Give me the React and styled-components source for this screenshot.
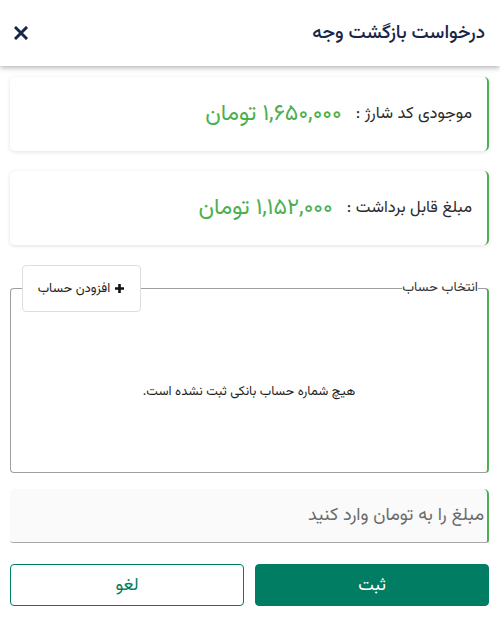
import React from "react";
import styled, { createGlobalStyle } from "styled-components";

const Global = createGlobalStyle`
  html, body { margin: 0; padding: 0; background: #ffffff; }
  body { font-family: "Vazirmatn", "Noto Sans Arabic", "DejaVu Sans", sans-serif; direction: rtl; }
  * { box-sizing: border-box; }
`;

const Page = styled.div`
  width: 500px;
  height: 620px;
  background: #ffffff;
  display: flex;
  flex-direction: column;
`;

const Header = styled.header`
  height: 66px;
  flex-shrink: 0;
  display: flex;
  align-items: center;
  justify-content: space-between;
  padding: 0 15px 0 13px;
  background: #fff;
  box-shadow: 0 2px 5px rgba(0, 0, 0, 0.28);
  position: relative;
  z-index: 1;
`;

const Title = styled.h1`
  margin: 0;
  font-size: 19px;
  font-weight: 500;
  color: #17264a;
`;

const Close = styled.button`
  border: 0;
  background: transparent;
  padding: 0;
  width: 16px;
  height: 16px;
  display: flex;
  align-items: center;
  justify-content: center;
  cursor: pointer;
`;

const Body = styled.main`
  display: flex;
  flex-direction: column;
  padding: 11px 11px 0 10px;
`;

const Card = styled.div`
  height: 74px;
  margin-bottom: ${(p) => p.$gap || 0}px;
  background: #fff;
  border-radius: 5px;
  border-right: 2px solid #4caf50;
  box-shadow: 0 1px 4px rgba(0, 0, 0, 0.12);
  display: flex;
  align-items: center;
  padding: 0 15px 0 12px;
  gap: 14px;
`;

const Label = styled.span`
  font-size: 16.5px;
  color: #2b2b2b;
`;

const Value = styled.span`
  font-size: 23px;
  color: #4caf50;
`;

const AccountSection = styled.section`
  position: relative;
  margin-top: 20px;
  padding-top: 14px;
`;

const Fieldset = styled.fieldset`
  margin: 0;
  height: 194px;
  border: 1px solid #9e9e9e;
  border-right: 2px solid #4caf50;
  border-radius: 4px;
  padding: 0;
  display: flex;
  align-items: center;
  justify-content: center;
`;

const Legend = styled.legend`
  font-size: 13.5px;
  color: #333;
  padding: 0;
  margin-right: 9px;
  line-height: 18px;
`;

const Empty = styled.p`
  margin: 14px 0 0;
  font-size: 13px;
  color: #1f1f1f;
`;

const AddButton = styled.button`
  position: absolute;
  top: 0;
  left: 12px;
  width: 119px;
  height: 47px;
  background: #fff;
  border: 1px solid #dedede;
  border-radius: 4px;
  font-family: inherit;
  font-size: 13px;
  color: #222;
  display: flex;
  align-items: center;
  justify-content: center;
  gap: 4px;
  direction: rtl;
  cursor: pointer;
`;

const AmountInput = styled.input`
  margin-top: 16px;
  height: 54px;
  width: 100%;
  background: #fafafa;
  border: 0;
  border-bottom: 1px solid #a8a8a8;
  border-right: 2px solid #4caf50;
  border-radius: 5px 5px 3px 3px;
  padding: 0 3px 0 10px;
  font-family: inherit;
  font-size: 18px;
  color: #333;
  direction: rtl;
  outline: none;
  &::placeholder { color: #6b6b6b; }
`;

const Actions = styled.div`
  margin-top: 21px;
  display: flex;
  gap: 11px;
`;

const ActionButton = styled.button`
  flex: 1;
  height: 42px;
  border-radius: 4px;
  font-family: inherit;
  font-size: 17.5px;
  cursor: pointer;
  border: 1px solid #007d62;
  background: ${(p) => (p.$primary ? "#007d62" : "#ffffff")};
  color: ${(p) => (p.$primary ? "#ffffff" : "#007d62")};
`;

export default function App() {
  return (
    <Page>
      <Global />
      <Header>
        <Title>درخواست بازگشت وجه</Title>
        <Close aria-label="بستن">
          <svg width="14" height="14" viewBox="0 0 14 14">
            <path d="M2 2 L12 12 M12 2 L2 12" stroke="#17264a" strokeWidth="3" strokeLinecap="square" />
          </svg>
        </Close>
      </Header>
      <Body>
        <Card $gap={20}>
          <Label>موجودی کد شارژ :</Label>
          <Value>۱,۶۵۰,۰۰۰ تومان</Value>
        </Card>
        <Card>
          <Label>مبلغ قابل برداشت :</Label>
          <Value>۱,۱۵۲,۰۰۰ تومان</Value>
        </Card>
        <AccountSection>
          <Fieldset>
            <Legend>انتخاب حساب</Legend>
            <Empty>هیچ شماره حساب بانکی ثبت نشده است.</Empty>
          </Fieldset>
          <AddButton>
            <svg width="11" height="11" viewBox="0 0 11 11">
              <path d="M5.5 1 V10 M1 5.5 H10" stroke="#111" strokeWidth="2.6" />
            </svg>
            <span>افزودن حساب</span>
          </AddButton>
        </AccountSection>
        <AmountInput placeholder="مبلغ را به تومان وارد کنید" />
        <Actions>
          <ActionButton $primary>ثبت</ActionButton>
          <ActionButton>لغو</ActionButton>
        </Actions>
      </Body>
    </Page>
  );
}
